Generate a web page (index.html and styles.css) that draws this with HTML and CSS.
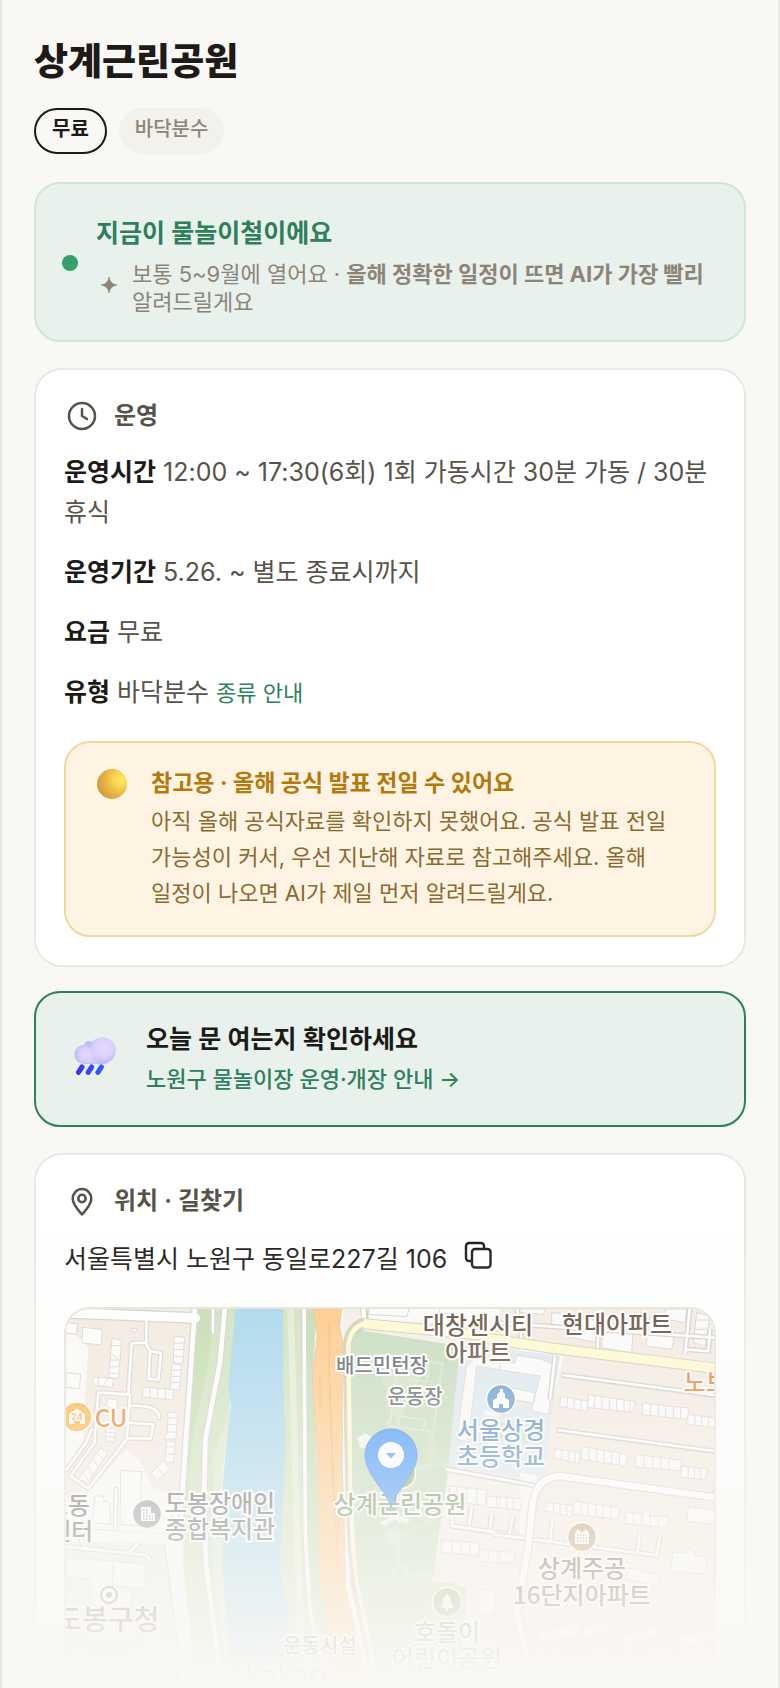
FILE: index.html
```html
<!DOCTYPE html>
<html lang="ko">
<head>
<meta charset="utf-8">
<meta name="viewport" content="width=device-width, initial-scale=1">
<title>상계근린공원</title>
<link rel="stylesheet" href="styles.css">
</head>
<body>
<main class="page">
  <header class="head">
    <h1 class="title">상계근린공원</h1>
    <div class="chips">
      <span class="chip chip-line">무료</span>
      <span class="chip chip-soft">바닥분수</span>
    </div>
  </header>

  <section class="season">
    <span class="dot"></span>
    <div class="season-body">
      <h2 class="season-title">지금이 물놀이철이에요</h2>
      <div class="season-note">
        <svg class="spark" viewBox="0 0 16 16" aria-hidden="true"><path d="M8 0Q9 7 16 8Q9 9 8 16Q7 9 0 8Q7 7 8 0Z" fill="currentColor" stroke="currentColor" stroke-width=".6"/></svg>
        <p>보통 5~9월에 열어요 · <strong>올해 정확한 일정이 뜨면 AI가 가장 빨리</strong> 알려드릴게요</p>
      </div>
    </div>
  </section>

  <section class="card">
    <h2 class="card-title">
      <svg class="card-icon" viewBox="0 0 36 36" fill="none" stroke="currentColor" stroke-width="2.5" stroke-linecap="round" stroke-linejoin="round" aria-hidden="true"><circle cx="18" cy="18" r="13"/><path d="M18 11v7l5 3"/></svg>
      운영
    </h2>
    <div class="facts">
      <p><b>운영시간</b> 12:00 ~ 17:30(6회) 1회 가동시간 30분 가동 / 30분 휴식</p>
      <p><b>운영기간</b> 5.26. ~ 별도 종료시까지</p>
      <p><b>요금</b> 무료</p>
      <p><b>유형</b> 바닥분수 <a class="more" href="#types">종류 안내</a></p>
    </div>
    <aside class="notice">
      <span class="ball"></span>
      <div>
        <h3 class="notice-title">참고용 · 올해 공식 발표 전일 수 있어요</h3>
        <p class="notice-text">아직 올해 공식자료를 확인하지 못했어요. 공식 발표 전일 가능성이 커서, 우선 지난해 자료로 참고해주세요. 올해 일정이 나오면 AI가 제일 먼저 알려드릴게요.</p>
      </div>
    </aside>
  </section>

  <a class="cta" href="#notice">
    <svg class="cloud" viewBox="0 0 42 38" aria-hidden="true">
      <defs>
        <radialGradient id="puff" cx=".55" cy=".4" r=".6"><stop offset="0" stop-color="#e9dcff"/><stop offset=".6" stop-color="#dacfff"/><stop offset="1" stop-color="#bdb7f6"/></radialGradient>
        <radialGradient id="puff2" cx=".6" cy=".5" r=".6"><stop offset="0" stop-color="#e6dcff"/><stop offset=".6" stop-color="#d6cffe"/><stop offset="1" stop-color="#bcb8f8"/></radialGradient>
        <linearGradient id="rain" x1="0" x2="1"><stop offset="0" stop-color="#3a34f2"/><stop offset="1" stop-color="#355bff"/></linearGradient>
      </defs>
      <circle cx="15" cy="9" r="5" fill="#bfbcf8"/>
      <rect x="8" y="16" width="24" height="11" rx="2" fill="#c9c3fb"/>
      <circle cx="28.500" cy="13.500" r="13.300" fill="url(#puff)"/>
      <circle cx="10" cy="17.500" r="9.600" fill="url(#puff2)"/>
      <rect x="11" y="12" width="14" height="14" rx="5" fill="#dbd2ff" opacity=".6"/>
      <path d="M4.500 35.300L8 30M14.200 35.300L17.700 30M23.900 35.300L27.400 30" stroke="url(#rain)" stroke-width="5" stroke-linecap="round"/>
    </svg>
    <span class="cta-body">
      <span class="cta-title">오늘 문 여는지 확인하세요</span>
      <span class="cta-sub">노원구 물놀이장 운영·개장 안내 →</span>
    </span>
  </a>

  <section class="card card-place">
    <h2 class="card-title">
      <svg class="card-icon" viewBox="0 0 36 36" fill="none" stroke="currentColor" stroke-width="2.500" stroke-linejoin="round" aria-hidden="true"><path d="M18 31.500C14 27 8.700 21.500 8.700 15.800A9.300 9.800 0 0 1 27.300 15.800C27.300 21.500 22 27 18 31.500Z"/><circle cx="18" cy="15.500" r="3.700"/></svg>
      위치 · 길찾기
    </h2>
    <div class="address">
      <span>서울특별시 노원구 동일로227길 106</span>
      <button class="copy" type="button" aria-label="주소 복사">
        <svg viewBox="0 0 28 28" fill="none" stroke="currentColor" stroke-width="2.400" stroke-linejoin="round" aria-hidden="true"><path d="M7 20H5a3 3 0 0 1-3-3V5a3 3 0 0 1 3-3h12a3 3 0 0 1 3 3v2"/><rect x="8" y="8" width="18.500" height="18.500" rx="3"/></svg>
      </button>
    </div>
    <div class="map">
      <svg viewBox="0 0 648 376" preserveAspectRatio="xMidYMin slice" role="img" aria-label="상계근린공원 지도">
        <rect width="648" height="376" fill="#fafaf9"/>
        <!-- west bank -->
        <g transform="translate(-16 -13) scale(.33333)">
          <path d="M48 80L90 95L90 140L115 160L105 290L100 400L50 520V39H440L400 605L310 575L270 495L230 458L110 590L48 620Z" fill="#f2e9dd"/>
          <path d="M48 85L115 155L105 300L100 430L48 520Z" fill="#fafaf9"/>
          <path d="M40 735L340 745L390 1010L420 1179H40Z" fill="#e4edf1"/>
          <path d="M440 39H560L540 320L515 540L520 820L560 1179H440L400 820L400 620Z" fill="#cce1ba"/>
          <path d="M440 39H490L470 240L430 400L412 620L400 600Z" fill="#bfdbab"/>
          <path d="M520 240L545 330L490 480L490 820L540 1179H590L530 820L515 560L545 320Z" fill="#d9e8c8"/>
          <path d="M556 39H760V1179H545L518 820L518 560L542 328L535 270Z" fill="#a2d5ec"/>
          <path d="M700 39H760V1179H705L680 1000L692 740L705 600Z" fill="#cce1ba"/>
          <g fill="none" stroke-linejoin="round" stroke-linecap="round">
            <g stroke="#cfcfcf" stroke-width="26"><path d="M40 50L240 58L436 66" stroke-width="36"/><path d="M436 20L395 620L350 720L380 960L420 1179" stroke-width="22"/><path d="M525 30L510 200L466 430L462 620L468 810L510 1130" stroke-width="22"/></g>
            <g stroke="#cfcfcf" stroke-width="15"><path d="M289 50V145L300 165L333 172L325 252L296 248L300 165M285 140L245 142L235 295L145 290L133 440L62 540L115 578L230 430L240 295M240 330Q330 325 327 366M235 380L310 385L302 428L230 426M125 400L108 440L50 520M489 30V110M198 580L196 700M48 700L390 725M48 752L270 775Q300 778 300 795M85 720L110 760M280 730L240 765"/></g>
            <path d="M40 50L240 58L436 66" stroke="#fff" stroke-width="28"/>
            <path d="M436 20L395 620L350 720L380 960L420 1179M525 30L510 200L466 430L462 620L468 810L510 1130" stroke="#fff" stroke-width="14"/>
            <path d="M289 50V145L300 165L333 172L325 252L296 248L300 165M285 140L245 142L235 295L145 290L133 440L62 540L115 578L230 430L240 295M240 330Q330 325 327 366M235 380L310 385L302 428L230 426M125 400L108 440L50 520M489 30V110M198 580L196 700M48 700L390 725M48 752L270 775Q300 778 300 795M85 720L110 760M280 730L240 765" stroke="#fff" stroke-width="8"/>
            <path d="M370 740L400 1010L420 1179M40 710L340 730" stroke="#fafafa" stroke-width="30"/>
          </g>
          <g fill="#fcfcfb" stroke="#d4d2d0" stroke-width="3">
            <path d="M98 94L157 100L154 147L96 141ZM48 80L83 84L80 115L48 112ZM48 230L92 235L88 278L48 274ZM245 97H259V107H245ZM212 523L275 527L270 690L210 685ZM135 600H160L162 615L178 620L183 685L125 680ZM192 796L288 805L284 878L186 870Z"/>
            <path d="M186 126L215 135L205 248L176 244ZM178 149H212M181 170L208 192M180 192H208M179 212H206M178 232H205M130 242L190 248L187 274L128 268ZM145 243V269M160 270L175 247M372 121L404 124L398 203L370 200ZM372 141H402M371 161H401M370 181H400M366 203L395 207L388 283L360 278ZM364 222H393M363 241H391M361 260H390M279 273L371 281L368 312L277 303ZM300 275V306M323 277V308M346 279V310M172 308L203 310L200 335L170 333ZM168 395L197 398L193 437L166 435ZM168 410H195M167 423H195M354 349L383 350L378 428L340 430L352 408ZM354 366H382M354 386H381M352 408H380M349 435L377 438L370 500L345 497ZM348 453H375M346 475H372M340 492L358 520L322 553L304 532ZM322 512L340 538M152 455L174 470L112 562L86 548ZM140 470L160 490M128 490L145 512M115 510L128 540M100 530L115 555"/>
            <path d="M48 785L190 795L186 870L245 880L240 985L262 990V1038L90 1030L120 990V850L48 842Z" opacity=".8"/>
          </g>
          <path d="M48 1048L350 1075Q385 1080 388 1130M48 1070L310 1090L305 1150" fill="none" stroke="#d4d2d0" stroke-width="3"/>
        </g>
        <!-- river, expressway and park -->
        <g transform="translate(214 -13) scale(.33333)">
          <path d="M-110 39H10L16 480L0 700L30 1000V1179H-110Z" fill="#a2d5ec"/>
          <path d="M10 39H110L100 240L118 700L150 1179H40L25 950L0 820L8 620L18 440L10 280Z" fill="#cce1ba"/>
          <path d="M82 39H108L98 240L118 720L150 1100L100 900L82 700Z" fill="#bddab0"/>
          <path d="M32 39L60 1000L90 1179" stroke="#e0ebd2" stroke-width="20" fill="none"/>
          <path d="M72 20L76 720L90 940L140 1179" stroke="#cacaca" stroke-width="18" fill="none"/>
          <path d="M72 20L76 720L90 940L140 1179" stroke="#fff" stroke-width="11" fill="none"/>
          <path d="M190 39H720V1179H290L222 850L196 620Z" fill="#f4eee6"/>
          <path d="M220 100L540 150L500 560L455 860L520 860L560 880L540 1179H290L222 820L210 540L212 140Z" fill="#c2dab8"/>
          <path d="M455 860L562 872L545 1000H440Z" fill="#cbdcbd"/>
          <path d="M540 150L720 180V545L500 510Z" fill="#dbe7f0"/>
          <path d="M250 39H720V100L270 70Z" fill="#fbfbfa"/>
          <path d="M100 39H185L178 90L192 155L200 560L204 850L262 1179H165L120 850L112 480L97 250L112 120Z" fill="#fec77f" stroke="#f6b48a" stroke-width="3"/>
          <path d="M148 80V260L165 640L175 860M120 240V340M150 270L158 560L180 720M140 820L165 960" fill="none" stroke="#f2b070" stroke-width="3"/>
          <path d="M250 30L255 70Q215 90 207 130L195 500L202 700L210 870L285 1179" stroke="#ccc6ae" stroke-width="22" fill="none"/>
          <path d="M250 30L252 70Q205 90 197 130L195 500L202 700L205 870L275 1179" stroke="#fff" stroke-width="14" fill="none"/>
          <path d="M740 130L250 83Q205 100 205 160L212 560L218 720Q224 870 300 1179" stroke="#cfcab4" stroke-width="34" fill="none"/>
          <path d="M740 130L250 83Q205 100 205 160L212 560L218 720Q224 870 300 1179" stroke="#fefacd" stroke-width="14" fill="none"/>
          <path d="M740 130L250 83" stroke="#fefacd" stroke-width="28" fill="none"/>
          <path d="M222 112L542 150L536 190L505 510L455 860L280 1060L232 840L216 560L214 150Z" fill="#c2dab8"/>
          <path d="M280 170L450 190L350 390Z" fill="#cfe0c2"/>
          <g fill="none" stroke="#dce8d4" stroke-width="4"><path d="M355 185L487 203L460 407L328 390ZM395 190L388 250L440 258L446 200M360 360L436 372L430 404M360 360L354 392M318 385Q400 280 480 300"/></g>
          <path d="M232 425L255 412L280 425L275 455L240 455Z" fill="#f4f5f2"/>
          <path d="M440 400Q480 460 440 510M510 500L400 520M350 720Q420 700 470 660M345 720L360 800M380 840L480 830M455 410L450 510" fill="none" stroke="#d3e2c9" stroke-width="14" opacity=".7"/>
          <circle cx="360" cy="826" r="20" fill="none" stroke="#d8e5cf" stroke-width="6"/><circle cx="338" cy="722" r="24" fill="#d6e3cd"/>
          <path d="M300 680L345 655L390 670L380 685L355 675L370 690L345 670L315 690Z" fill="#f5f4f0"/>
          <path d="M590 180L720 200V230L590 210L565 438L530 430L560 210Z" fill="#fafafa" stroke="#d5d8da" stroke-width="3"/>
          <path d="M615 345L720 355V370L612 358Z" fill="#fafafa"/><path d="M650 380L720 385V450L645 440Z" fill="#cfe2bf"/>
          <path d="M500 520L720 560M515 650L517 690L720 720M575 630L567 690M635 655L630 700M700 660L695 710M780 735L700 930L740 1050" fill="none" stroke="#c9c9c9" stroke-width="17"/>
          <path d="M498 520L722 560M515 650L517 690L722 720M575 630L567 690M635 655L630 700M700 660L695 710M780 735L700 930L740 1050" fill="none" stroke="#fff" stroke-width="9"/>
          <path d="M510 570L620 582L615 628L505 615ZM625 600L720 612V642L617 632ZM487 732L600 742L595 780L482 768ZM598 760L705 772L700 805L595 795ZM530 572V618M560 576V622M590 580V624M650 602V635M680 606V638M515 735V770M543 738V775M570 740V778M625 763V798M652 766V800M680 770V803M600 880L650 887L640 955L590 948Z" fill="#fcfcfb" stroke="#d4d2d0" stroke-width="3"/>
          <path d="M270 20L265 55L380 62L388 39M470 50L550 60M480 39L475 55" fill="none" stroke="#d0d0d0" stroke-width="3"/>
        </g>
        <!-- apartment blocks -->
        <g transform="translate(434 -13) scale(.33333)">
          <path d="M0 39H650V1179H-100L60 760L110 540L190 180L0 140Z" fill="#f4eae0"/>
          <path d="M0 160L160 175L180 180L130 545L0 515Z" fill="#dbe7f0"/>
          <path d="M0 380L130 390V445L0 430Z" fill="#cfe2bf"/>
          <g fill="#fbfbfa" stroke="#d5d3d1" stroke-width="3">
            <path d="M50 178L120 188L158 205L148 290L150 325L145 355L95 345L120 240L0 222V200H45ZM0 270L105 290L100 320L0 305ZM155 50L210 55L200 90L155 85ZM60 39H135L130 55L60 50ZM210 60L310 75L290 140L195 120ZM310 80L400 90L395 170L305 155ZM450 60L525 110L515 160L438 150ZM495 39H560L555 80L500 70ZM590 50L630 60L615 150L580 140ZM587 72H628M585 100H622"/>
            <path d="M182 303L202 304L240 312L264 315L260 347L179 330ZM266 296L405 316L400 350L262 334ZM428 320L500 330L567 336L562 370L426 356ZM565 355L645 366V395L560 385ZM165 460L242 468L235 503L160 485ZM248 452L383 475L375 510L242 490ZM408 475L545 493L540 525L405 512ZM545 510L622 520L618 550L542 545ZM140 620L220 628L215 663L136 645ZM222 615L360 636L352 670L218 655ZM380 648L430 655L435 640L450 645L448 660L505 662L500 695L375 682ZM565 632L645 642V685L560 675ZM518 768L560 772L563 760L585 765V778L623 783L615 835L514 825ZM0 602L68 610L60 642L0 635ZM0 765L45 770L40 803L0 797ZM385 815L480 838L472 868L380 850ZM110 1010L240 980L243 1015L115 1042ZM250 990L325 978L325 1010L250 1022ZM355 1018L470 990L475 1020L360 1046ZM530 1022L645 1000V1035L530 1056ZM452 957L482 950V962L454 970Z"/>
            <path d="M203 305L201 333M222 308V337M243 313V343M284 299V336M306 302V340M328 306V343M350 309V346M372 312V348M390 314V350M452 324V358M475 326V361M497 330V364M520 332V368M542 334V369M585 359V388M605 361V391M625 363V393M185 462V490M205 464V495M225 466V500M267 455V493M290 460V498M312 463V501M335 467V504M358 470V508M432 478V514M458 482V517M482 485V520M507 488V523M565 513V547M583 515V549M602 517V550M160 622V650M180 624V655M200 626V660M243 618V657M265 622V661M287 626V665M310 629V668M333 633V669M400 650V686M425 655V689M450 658V691M475 660V693M20 604V638M40 606V641"/>
          </g>
          <path d="M-20 80L645 125M185 237L645 298M170 402L645 466M50 30L65 130M296 70L293 160M570 30L555 175M630 100L625 165L555 160M-20 545L110 570M165 180L150 310M-20 715L470 778L480 720M158 675L150 735M420 712L412 770M38 660L28 715M645 600L660 450M140 1050L155 1120M195 1040L215 1110M250 1030L265 1095M310 1025L325 1085M90 1130L490 1055" fill="none" stroke="#cbcbcb" stroke-width="16"/>
          <path d="M-20 80L645 125M188 237L650 298M173 402L650 466M50 30L65 130M296 70L293 160M570 30L555 175M630 100L625 165L555 160M-20 545L110 570M165 180L150 310M-20 715L470 778L480 720M158 675L150 735M420 712L412 770M38 660L28 715M645 600L660 450M140 1050L155 1120M195 1040L215 1110M250 1030L265 1095M310 1025L325 1085M90 1130L490 1055" fill="none" stroke="#fff" stroke-width="8"/>
          <path d="M650 605L180 540Q110 545 98 620L85 750L50 950L90 1130" fill="none" stroke="#d0d0d0" stroke-width="26"/>
          <path d="M650 605L180 540Q110 545 98 620L85 750L50 950L90 1130" fill="none" stroke="#fff" stroke-width="19"/>
          <path d="M-60 124L160 157L645 217" fill="none" stroke="#cfcab4" stroke-width="34"/>
          <path d="M-60 124L160 157L650 217" fill="none" stroke="#fefacd" stroke-width="28"/>
        </g>
        <!-- place icons -->
        <g stroke="#fff" stroke-width="1.500">
          <circle cx="11" cy="108" r="15" fill="#fbae3a"/>
          <circle cx="81" cy="205" r="14.500" fill="#858f95"/>
          <circle cx="435" cy="90" r="14.500" fill="#5793ca"/>
          <circle cx="335" cy="165" r="14.500" fill="#86ac60"/>
          <circle cx="381" cy="293" r="14.500" fill="#86ac60"/>
          <circle cx="516" cy="228" r="14.500" fill="#b9966a"/>
        </g>
        <g fill="#fff">
          <path d="M3 105L11 99.500L19 105V115H14V112H8V115H3Z"/>
          <path d="M75 198H85V204H89V212H75Z"/>
          <path d="M427 99V91L431 89V85L434 83V80H437V83L439 85V89L443 91V99H437V95H433V99Z"/>
          <path d="M381 284L386 292H384L388 299H382V302H380V299H374L378 292H376Z"/>
          <path d="M509 235V224L512 220L516 224L520 220L523 224V235Z"/>
        </g>
        <path d="M77 201H83M77 204H83M77 207H87M77 210H87M511 226H521M511 229H521M511 232H521" stroke="#858f95" stroke-width="1.300" stroke-dasharray="1.500 1.500"/>
        <text class="tiny" x="11" y="111">24</text>
        <circle cx="43" cy="286" r="8" fill="#fff" stroke="#777" stroke-width="2"/><circle cx="43" cy="286" r="3" fill="#777"/>
        <g class="label">
          <text class="apt" x="412" y="25">대창센시티</text><text class="apt" x="412" y="52">아파트</text>
          <text class="apt" x="551" y="24">현대아파트</text>
          <text class="small" x="316" y="64">배드민턴장</text><text class="small" x="349" y="95">운동장</text>
          <text class="school" x="435" y="130">서울상경</text><text class="school" x="435" y="156">초등학교</text>
          <text class="park" x="334" y="204">상계근린공원</text>
          <text class="plain" x="154" y="203">도봉장애인</text><text class="plain" x="154" y="229">종합복지관</text>
          <text class="plain" x="6" y="205">2동</text><text class="plain" x="5" y="231">센터</text>
          <text class="shop" x="45" y="118">CU</text><text class="shop" x="662" y="82">노브랜드</text>
          <text class="big" x="42" y="321">도봉구청</text>
          <text class="apt" x="516" y="268">상계주공</text><text class="apt" x="516" y="295">16단지아파트</text>
          <text class="park" x="381" y="332">호돌이</text><text class="park" x="381" y="358">어린이공원</text>
          <text class="small" x="254" y="344">운동시설</text>
          <text class="small" x="145" y="380">100m</text><text class="big" x="220" y="376">kakao</text>
        </g>
        <path d="M22 362V371H110V362" fill="none" stroke="#666" stroke-width="4"/>
        <!-- marker -->
        <ellipse cx="325" cy="200" rx="6" ry="2" fill="#000" opacity=".3"/>
        <path d="M325 199C322 183 299 166 299 146A26 26 0 0 1 351 146C351 166 328 183 325 199Z" fill="#308efa" stroke="#2878d8" stroke-width="1"/>
        <circle cx="325" cy="146" r="13" fill="#fff"/><path d="M320 144H330L325 149.500Z" fill="#308efa"/>
      </svg>
    </div>
  </section>
  <div class="fade"></div>
</main>
</body>
</html>
```
FILE: styles.css
```css
* { box-sizing: border-box; }
body {
  margin: 0;
  background: #faf8f4;
  color: #1c1b18;
  font-family: Inter, "Noto Sans CJK KR", sans-serif;
  font-size: 25px;
  line-height: 40px;
  word-break: keep-all;
}
h1, h2, h3, p { margin: 0; }
.page {
  position: relative;
  display: flex;
  flex-direction: column;
  gap: 24px;
  min-height: 100vh;
  padding: 34px 32px 0;
  border: solid #e9e7e1;
  border-width: 0 2px;
  overflow: hidden;
}
.head { display: flex; flex-direction: column; gap: 18px; margin-bottom: 4px; }
.title { font-size: 37px; line-height: 56px; font-weight: 800; }
.chips { display: flex; gap: 12px; }
.chip {
  padding: 5px 14px 9px;
  border: 2px solid transparent;
  border-radius: 23px;
  font-size: 20px;
  line-height: 28px;
  font-weight: 500;
}
.chip-line { padding: 5px 16px 9px; border-color: #1c1b18; font-weight: 700; }
.chip-soft { background: #f3f1ec; background-clip: border-box; color: #8c8577; }

.season {
  display: flex;
  align-items: center;
  gap: 18px;
  padding: 25px 26px 24px;
  border: 2px solid #cfe5da;
  border-radius: 26px;
  background: #e8f1ec;
}
.dot { flex: none; width: 16px; height: 16px; border-radius: 50%; background: #35a06a; }
.season-body { padding-top: 5px; }
.season-title { font-size: 25px; line-height: 38px; font-weight: 600; color: #2e7f5b; }
.season-note {
  display: flex;
  align-items: flex-start;
  gap: 15px;
  padding: 8px 0 0 5px;
  color: #8c8577;
  font-size: 22px;
  line-height: 28px;
}
.spark { flex: none; width: 16px; height: 16px; margin-top: 17px; }
.season-note strong { font-weight: 700; }

.card {
  margin-top: 2px;
  padding: 26px 28px 28px;
  border: 2px solid #eae8e2;
  border-radius: 28px;
  background: #fff;
}
.card-title {
  display: flex;
  align-items: center;
  gap: 14px;
  font-size: 24px;
  line-height: 40px;
  font-weight: 600;
  color: #57534a;
}
.card-icon { width: 36px; height: 36px; }
.facts { display: flex; flex-direction: column; gap: 20px; padding: 16px 0 28px; color: #57534a; }
.facts b { font-weight: 600; color: #1c1b18; }
.more { font-size: 22px; color: #2e7f5b; text-decoration: none; }
.notice {
  display: flex;
  align-items: flex-start;
  gap: 24px;
  padding: 20px 31px 24px;
  border: 2px solid #f0d9a0;
  border-radius: 26px;
  background: #fff4e3;
}
.ball {
  flex: none;
  width: 30px;
  height: 30px;
  margin-top: 6px;
  border-radius: 50%;
  background: radial-gradient(circle at 80% 35%, #ffe95f 0, #fbd650 22%, #dfab42 60%, #c9973f 85%, #d6835c 100%);
}
.notice-title { font-size: 23px; line-height: 40px; font-weight: 700; color: #b27a0c; }
.notice-text { font-size: 22px; line-height: 36px; color: #8a6a2e; }

.cta {
  display: flex;
  align-items: center;
  gap: 30px;
  padding: 26px 38px;
  border: 2px solid #2e7f5b;
  border-radius: 26px;
  background: #e8f1ec;
  text-decoration: none;
}
.cloud { flex: none; width: 42px; height: 38px; margin-bottom: 6px; }
.cta-body { display: flex; flex-direction: column; }
.cta-title { font-size: 25px; line-height: 40px; font-weight: 600; color: #1c1b18; }
.cta-sub { font-size: 22px; line-height: 40px; font-weight: 500; color: #2e7f5b; }

.card-place { padding-bottom: 0; border-bottom: 0; border-radius: 28px 28px 0 0; }
.address { display: flex; align-items: center; gap: 17px; padding: 18px 0 28px; }
.copy { width: 28px; height: 28px; margin-bottom: 8px; padding: 0; border: 0; background: none; color: inherit; }
.copy svg { display: block; width: 28px; height: 28px; }
.map {
  height: 377px;
  border: 2px solid #e4e2dc;
  border-bottom: 0;
  border-radius: 26px 26px 0 0;
  overflow: hidden;
}
.map svg { display: block; width: 100%; height: 100%; }
.label { font-family: "Noto Sans CJK KR", sans-serif; font-size: 24px; font-weight: 500; text-anchor: middle; }
.label text { stroke: #fff; stroke-width: 4px; stroke-linejoin: round; paint-order: stroke; }
.apt { fill: #56402f; }
.school { fill: #4684c0; }
.park { fill: #66874e; }
.plain { fill: #4e595f; }
.shop { fill: #e57a1d; }
.small { font-size: 20px; fill: #4e5960; }
.big { font-size: 28px; fill: #665f58; }
.tiny { font-family: Inter, sans-serif; font-size: 9px; font-weight: 700; text-anchor: middle; fill: #fbae3a; }
.fade {
  position: absolute;
  inset: auto 0 0;
  height: 460px;
  background: linear-gradient(rgba(250, 248, 244, 0), #faf8f4 99%);
  pointer-events: none;
}
```
